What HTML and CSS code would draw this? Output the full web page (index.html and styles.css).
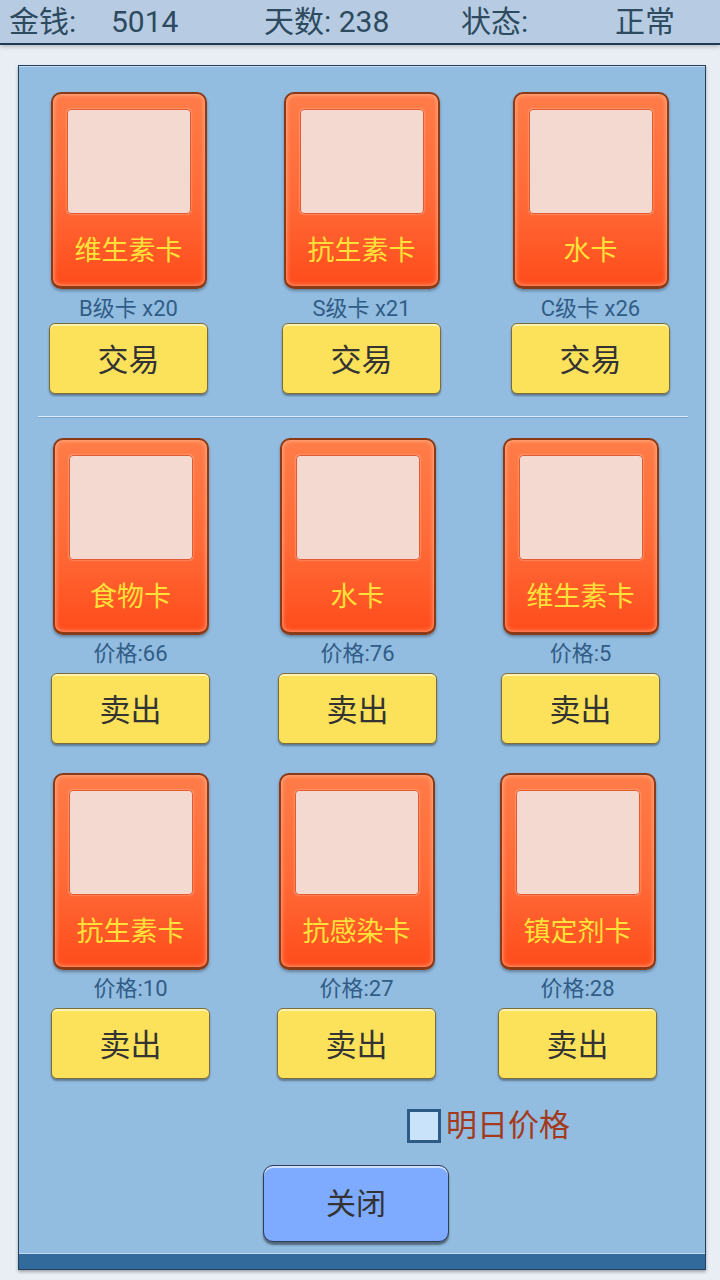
FILE: index.html
```html
<!DOCTYPE html>
<html lang="zh">
<head>
    <meta charset="UTF-8">
    <meta name="viewport" content="width=device-width, initial-scale=1.0">
    <title>卡牌交易</title>
    <link rel="stylesheet" href="styles.css">
</head>
<body>
    <div class="topbar">
        <span>金钱:</span>
        <span>5014</span>
        <span>天数: 238</span>
        <span>状态:</span>
        <span>正常</span>
    </div>

    <div class="panel">
        <!-- 我的卡牌 -->
        <div class="row row-own">
            <div class="cell">
                <div class="card"><div class="card-face"></div><div class="card-name">维生素卡</div></div>
                <div class="card-info">B级卡 x20</div>
                <button class="trade-btn">交易</button>
            </div>
            <div class="cell">
                <div class="card"><div class="card-face"></div><div class="card-name">抗生素卡</div></div>
                <div class="card-info">S级卡 x21</div>
                <button class="trade-btn">交易</button>
            </div>
            <div class="cell">
                <div class="card"><div class="card-face"></div><div class="card-name">水卡</div></div>
                <div class="card-info">C级卡 x26</div>
                <button class="trade-btn">交易</button>
            </div>
        </div>

        <div class="divider"></div>

        <!-- 市场 -->
        <div class="row row-market">
            <div class="cell">
                <div class="card"><div class="card-face"></div><div class="card-name">食物卡</div></div>
                <div class="card-info">价格:66</div>
                <button class="trade-btn">卖出</button>
            </div>
            <div class="cell">
                <div class="card"><div class="card-face"></div><div class="card-name">水卡</div></div>
                <div class="card-info">价格:76</div>
                <button class="trade-btn">卖出</button>
            </div>
            <div class="cell">
                <div class="card"><div class="card-face"></div><div class="card-name">维生素卡</div></div>
                <div class="card-info">价格:5</div>
                <button class="trade-btn">卖出</button>
            </div>
        </div>

        <div class="row row-market2">
            <div class="cell">
                <div class="card"><div class="card-face"></div><div class="card-name">抗生素卡</div></div>
                <div class="card-info">价格:10</div>
                <button class="trade-btn">卖出</button>
            </div>
            <div class="cell">
                <div class="card"><div class="card-face"></div><div class="card-name">抗感染卡</div></div>
                <div class="card-info">价格:27</div>
                <button class="trade-btn">卖出</button>
            </div>
            <div class="cell">
                <div class="card"><div class="card-face"></div><div class="card-name">镇定剂卡</div></div>
                <div class="card-info">价格:28</div>
                <button class="trade-btn">卖出</button>
            </div>
        </div>

        <label class="tomorrow">
            <span class="checkbox"></span>
            <span>明日价格</span>
        </label>

        <button class="close-btn">关闭</button>

        <div class="panel-foot"></div>
    </div>
</body>
</html>
```

FILE: styles.css
```css
body {
    margin: 0;
    width: 720px;
    height: 1280px;
    overflow: hidden;
    background: #e8eef3;
    font-family: Roboto, "Noto Sans CJK SC", sans-serif;
}

.topbar {
    display: grid;
    grid-template-columns: 102px 153px 197px 154px auto;
    align-items: center;
    height: 43px;
    padding-left: 9px;
    background: #b7cce2;
    border-bottom: 2px solid #1f3854;
    box-shadow: 0 2px 4px rgba(0, 0, 0, 0.2);
    color: #2d4a5f;
    font-size: 30px;
    line-height: 39px;
}

.panel {
    display: flex;
    flex-direction: column;
    box-sizing: border-box;
    width: 688px;
    height: 1205px;
    margin: 20px 0 0 18px;
    padding-top: 26px;
    background: #92bce0;
    border: 1px solid #24405e;
    box-shadow: 0 2px 3px rgba(0, 0, 0, 0.3), inset 0 1px 0 #c4dcf2;
}

.row {
    display: grid;
    margin-left: 30px;
    grid-template-columns: 233px 229px 159px;
}
.row-market {
    margin-left: 32px;
    grid-template-columns: 227px 223px 159px;
}
.row-market2 {
    margin-top: 29px;
    margin-left: 32px;
    grid-template-columns: 226px 221px 159px;
}

.cell {
    display: flex;
    flex-direction: column;
    align-items: center;
    width: 159px;
}

.card {
    box-sizing: border-box;
    width: 156px;
    height: 197px;
    padding: 15px 14px 0;
    border: 2px solid #8a3a16;
    border-bottom-width: 3px;
    border-radius: 10px;
    background: linear-gradient(180deg, #ff7c48 0%, #ff6a37 55%, #ff4c1b 100%);
    box-shadow: inset 0 0 5px rgba(255, 210, 180, 0.8), 0 2px 3px rgba(0, 0, 0, 0.3);
}
.card-face {
    height: 103px;
    background: #f4d9d0;
    border: 1px solid #e45a30;
    border-radius: 4px;
    box-shadow: 0 0 2px rgba(255, 230, 210, 0.8);
}
.card-name {
    margin: 19px -6px 0;
    text-align: center;
    color: #ffe13a;
    font-size: 27px;
    line-height: 36px;
}

.card-info {
    color: #315c86;
    font-size: 22px;
    line-height: 38px;
}
.row-own .card-info {
    padding-top: 6px;
    line-height: 28px;
}

.trade-btn {
    box-sizing: border-box;
    width: 159px;
    height: 71px;
    padding: 0 0 2px;
    font-family: inherit;
    font-size: 31px;
    color: #333;
    background: #fce25b;
    border: 1px solid #7d6b3a;
    border-radius: 6px;
    box-shadow: inset 0 2px 0 #fff3b5, 0 2px 2px rgba(0, 0, 0, 0.35);
}

.divider {
    width: 650px;
    height: 1px;
    margin: 22px 0 21px 19px;
    background: #dcefff;
    box-shadow: 0 1px 0 #7ba5cc;
}

.tomorrow {
    display: flex;
    align-items: center;
    gap: 5px;
    margin: 30px 0 0 388px;
    color: #a33a1d;
    font-size: 31px;
    line-height: 34px;
}
.checkbox {
    box-sizing: border-box;
    width: 34px;
    height: 34px;
    background: #c9e3fb;
    border: 3px solid #2e5a86;
}

.close-btn {
    box-sizing: border-box;
    width: 186px;
    height: 77px;
    margin: 22px 0 0 244px;
    padding: 0 0 6px;
    font-family: inherit;
    font-size: 30px;
    color: #333;
    background: #7eaaff;
    border: 1px solid #2c3e58;
    border-radius: 10px;
    box-shadow: inset 0 2px 0 #cde0ff, 0 3px 2px rgba(0, 0, 0, 0.45);
}

.panel-foot {
    margin-top: auto;
    height: 15px;
    background: #336a9c;
    border-top: 1px solid #c4dcf2;
}
```
